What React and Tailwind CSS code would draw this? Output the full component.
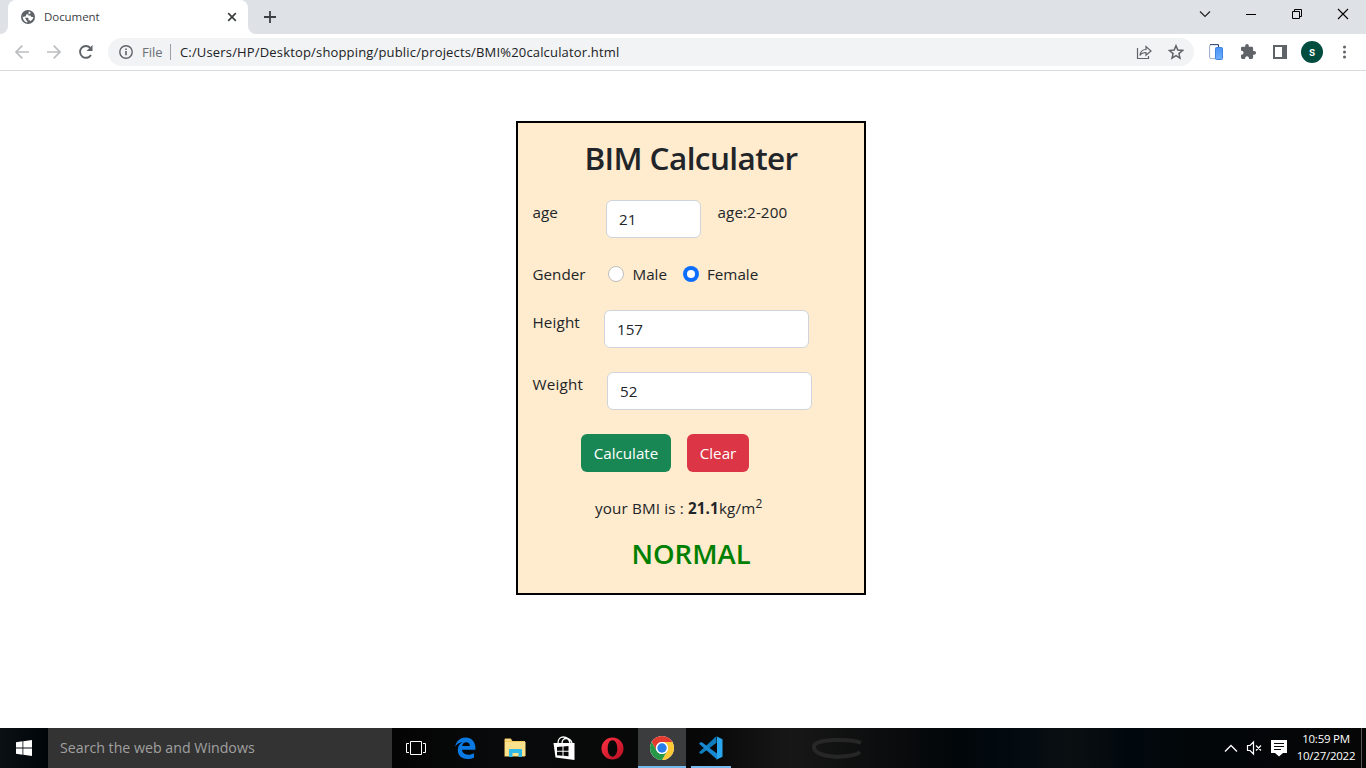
import React from "react";

function Globe() {
  return (
    <svg width="14" height="14" viewBox="0 0 14 14">
      <circle cx="7" cy="7" r="7" fill="#5f6368" />
      <path d="M7.7 1.5v1.6c0 .8-.6 1.3-1.4 1.3H5v1.3c0 .4-.3.7-.7.7H3v1.3h3.8c.4 0 .7.3.7.7v1.9h.7c.6 0 1.1.4 1.3.9A5.5 5.5 0 0 0 12.5 7h-1.6a1.5 1.5 0 0 1-1.5-1.4H7.2V4.2l2.2-.6V2C8.900 1.700 8.300 1.500 7.700 1.500zM1.700 6.200C1.500 9 3.500 12 6.300 12.400V11c-.8 0-1.300-.6-1.300-1.400V9z" fill="#fff" />
    </svg>
  );
}

function TabStrip() {
  return (
    <div className="flex h-[34px] bg-[#dee1e6]">
      <div className="flex w-2 items-end bg-white">
        <div className="h-[34px] w-2 rounded-br-lg bg-[#dee1e6]" />
      </div>
      <div className="flex w-[240px] items-center rounded-t-lg bg-white pl-[13px] pr-[11px]">
        <Globe />
        <span className="ml-[9px] flex-1 text-[11.5px] leading-none tracking-[-0.06px] text-[#3c4043]">Document</span>
        <svg width="10" height="10" viewBox="0 0 10 10" stroke="#3c4043" strokeWidth="1.7"><path d="M1.200 1.200l7.600 7.600M8.800 1.200L1.200 8.800" /></svg>
      </div>
      <div className="flex w-2 bg-white">
        <div className="h-[34px] w-2 rounded-bl-lg bg-[#dee1e6]" />
      </div>
      <div className="flex flex-1 items-center pl-2">
        <svg width="12" height="12" viewBox="0 0 12 12" stroke="#3c4043" strokeWidth="1.8"><path d="M6 0v12M0 6h12" /></svg>
      </div>
      <div className="flex items-start pt-[8px]">
        <svg width="168" height="12" viewBox="1198 8 168 12" fill="none" stroke="#1a1a1a">
          <path d="M1200 11.500l5 5 5-5" stroke="#222" strokeWidth="1.200" />
          <path d="M1246 14.500h10" stroke="#000" />
          <path d="M1292.500 11.500h7v7h-7zM1294.500 11.500v-2h7v7h-2" stroke="#000" />
          <path d="M1338 9l10 10M1348 9l-10 10" stroke="#000" strokeWidth="1.100" />
        </svg>
      </div>
    </div>
  );
}

function Toolbar() {
  return (
    <div className="flex h-[37px] items-center border-b border-[#d8dadd] bg-white">
      <svg className="ml-[15px] shrink-0" width="78" height="16" viewBox="15 44 78 16" fill="none" strokeWidth="1.7">
        <path d="M29 52H16M22.300 45.700L16 52l6.300 6.300M47 52h13M53.700 45.700L60 52l-6.300 6.300" stroke="#bbbdbf" />
        <path d="M91 55A5.900 5.900 0 1 1 90.300 47.900" stroke="#5f6368" strokeWidth="1.900" />
        <path d="M92.500 45v6h-6z" fill="#5f6368" />
      </svg>
      <div className="ml-[15px] flex h-7 w-[1086px] items-center rounded-full bg-[#f1f3f4] pl-[11px] pr-[10px]">
        <svg width="14" height="14" viewBox="0 0 14 14" fill="none" stroke="#5f6368" strokeWidth="1.400"><circle cx="7" cy="7" r="6.200" /><path d="M7 6v4.200M7 3.600v1.400" strokeWidth="1.600" /></svg>
        <span className="ml-[9px] w-[21px] text-[13px] leading-none text-[#6b6f74]">File</span>
        <div className="ml-[7px] h-4 w-px bg-[#9aa0a6]" />
        <span className="ml-[9px] flex-1 whitespace-nowrap text-[13px] leading-none tracking-[0.165px] text-[#202124]">C:/Users/HP/Desktop/shopping/public/projects/BMI%20calculator.html</span>
        <svg width="48" height="16" viewBox="1136 44 48 16" fill="none" stroke="#5f6368" strokeWidth="1.200">
          <path d="M1137.500 48v10.500h11V56M1140 55.500c.4-4 2.500-6 6-6V46.500l5 4.500-5 4.300v-2.800c-3 0-4.700.8-6 3z" />
          <path d="M1176 45.700l1.800 4.400 4.700.4-3.600 3.100 1.100 4.600-4-2.500-4 2.500 1.100-4.600-3.600-3.100 4.700-.4z" strokeWidth="1.500" />
        </svg>
      </div>
      <svg className="ml-[15px] shrink-0" width="78" height="18" viewBox="1209 43 78 18">
        <defs><linearGradient id="phone" x1="0" y1="0" x2="0" y2="1"><stop stopColor="#4a94f5" /><stop offset="1" stopColor="#6db0ff" /></linearGradient></defs>
        <rect x="1209.600" y="44.600" width="9" height="14" rx="1.500" fill="#fff" stroke="#9aabc2" />
        <path d="M1210 44.600h8.500v3" stroke="#31496b" fill="none" />
        <rect x="1215.500" y="47.500" width="7" height="12" rx="1" fill="url(#phone)" stroke="#3e83df" />
        <path transform="translate(.7 0)" d="M1253.500 51h-1.100v-2.900c0-.8-.6-1.400-1.400-1.400h-2.900v-1a1.800 1.800 0 0 0-3.600 0v1h-2.800c-.8 0-1.400.6-1.400 1.400v2.700h1a2 2 0 0 1 0 3.900h-1v2.900c0 .8.600 1.400 1.400 1.400h2.700v-1.100a2 2 0 0 1 3.900 0V59h2.700c.8 0 1.400-.6 1.400-1.400v-2.900h1.100a1.850 1.850 0 0 0 0-3.700z" fill="#5f6368" />
        <path fillRule="evenodd" d="M1273 45h14v14h-14zM1275 47v10h7V47z" fill="#5f6368" />
      </svg>
      <div className="ml-[14px] flex h-[22px] w-[22px] shrink-0 items-center justify-center rounded-full bg-[#004d40] pb-px font-[Roboto] text-[9px] font-medium leading-none text-white"><span className="text-[12px]">s</span></div>
      <svg className="ml-[20px]" width="4" height="14" viewBox="0 0 4 14" fill="#5f6368"><circle cx="1.500" cy="2" r="1.500" /><circle cx="1.500" cy="7" r="1.500" /><circle cx="1.500" cy="12" r="1.500" /></svg>
    </div>
  );
}

function Field({ value, className }) {
  return (
    <div className={"flex h-[38px] items-center rounded-md border border-[#ced4da] bg-white pl-3 text-[15.2px] " + className}>
      <span className="leading-6">{value}</span>
    </div>
  );
}

function Calculator() {
  return (
    <main className="flex flex-1 items-start bg-white pl-[516px] pt-[50px]">
      <section className="flex h-[474px] w-[350px] flex-col border-2 border-black bg-[#ffebcd] text-[15.2px] font-[370] leading-6 text-[#212529]">
        <h1 className="mt-[16px] text-center text-[31.5px] font-[560] leading-[38px] tracking-[-0.6px]">BIM Calculater</h1>
        <div className="mt-[23px] flex h-[38px] items-start pl-[14px]">
          <span className="w-[74px] pl-[0.5px]">age</span>
          <Field value="21" className="w-[95px]" />
          <span className="ml-[16.5px] tracking-[0.1px]">age:2-200</span>
        </div>
        <div className="mt-[24px] flex h-6 items-center pl-[14px]">
          <span className="w-[76px] pl-[0.5px]">Gender</span>
          <span className="h-4 w-4 rounded-full border border-[#bfbfbf] bg-white" />
          <span className="ml-2 w-[51px] pl-[0.5px]">Male</span>
          <span className="flex h-4 w-4 items-center justify-center rounded-full bg-[#0d6efd]"><span className="h-2 w-2 rounded-full bg-white" /></span>
          <span className="ml-2">Female</span>
        </div>
        <div className="mt-[24px] flex h-[38px] items-start pl-[14px]">
          <span className="w-[72px] pl-[0.5px] tracking-[0.15px]">Height</span>
          <Field value="157" className="w-[205px]" />
        </div>
        <div className="mt-[24px] flex h-[38px] items-start pl-[14px]">
          <span className="w-[75px] pl-[0.5px] tracking-[0.2px]">Weight</span>
          <Field value="52" className="w-[205px]" />
        </div>
        <div className="mt-[24px] flex gap-4 pl-[63px] font-normal text-white">
          <button className="h-[38px] w-[90px] whitespace-nowrap rounded-md bg-[#198754]">Calculate</button>
          <button className="h-[38px] w-[62px] rounded-md bg-[#dc3545]">Clear</button>
        </div>
        <p className="mt-[24px] h-6 whitespace-nowrap pl-[77px] tracking-[0.15px]">your BMI is : <b>21.1</b>kg/m<sup className="text-[12px] leading-none">2</sup></p>
        <h2 className="mt-[17px] text-center text-[27.5px] font-[560] leading-[34px] text-[#008000]">NORMAL</h2>
      </section>
    </main>
  );
}

function Slot({ children, className = "" }) {
  return <div className={"mr-px flex h-10 w-12 shrink-0 items-center justify-center " + className}>{children}</div>;
}

function Taskbar() {
  return (
    <footer className="flex h-10 items-center bg-[linear-gradient(90deg,#0b1014_0,#00050a_48px,#040404_392px,#090a0b_500px,#070707_700px,#171717_790px,#0b0c0d_890px,#01060a_960px,#020a10_1010px,#0a0f12_1070px,#01080d_1130px,#020609_1200px,#060606_1366px)] text-white">
      <div className="flex h-10 w-12 items-center justify-center">
        <svg width="16" height="16" viewBox="0 0 16 16" fill="#fff"><path d="M0 2.200l6.500-.9v6.200H0zM7.300 1.200L16 0v7.500H7.300zM0 8.400h6.500v6.300L0 13.800zM7.300 8.400H16V16l-8.700-1.200z" /></svg>
      </div>
      <div className="flex h-10 w-[344px] items-center bg-[#333] pl-3 pt-px text-[14.2px] leading-none text-[#a0a0a0]">Search the web and Windows</div>
      <Slot className="mr-[2px]">
        <svg width="20" height="14" viewBox="0 0 20 14" fill="none" stroke="#fff"><path d="M4.500.5h11v13h-11zM3 2.500H.5v9H3M17 2.500h2.500v9H17" /></svg>
      </Slot>
      <Slot>
        <svg width="21" height="22" viewBox="0 0 21 22"><path d="M.2 9.600C1.200 3.800 5.300.4 10.600.4c6.200 0 9.800 4.600 9.800 10v2.400H7c.3 3.500 3.200 4.900 6.600 4.900 2 0 3.900-.6 5.500-1.500v4.200c-1.900 1-4.300 1.500-6.700 1.500-6 0-9.600-3.500-9.600-8.900 0-3.800 2.100-6.600 5.100-8C5 5.400 2 6.600.2 9.600zM7.200 9h7.700c0-2.500-1.300-3.800-3.600-3.800S7.600 6.700 7.200 9z" fill="#0a7ae2" /></svg>
      </Slot>
      <Slot className="pl-[2px]">
        <svg width="22" height="20" viewBox="0 0 22 20"><path d="M.5 3V1.500Q.5.500 1.500.5h5.300L8.500 3H21v15.500H.5z" fill="#f4c95d" /><path d="M1 4h20.500v14H1z" fill="#fce18c" /><path d="M1.500 2h5" stroke="#fff0b4" /><path d="M5 19v-7.500Q5 11 6.500 11h10q1.500 0 1.500.5V19h-3.500v-4h-6v4z" fill="#2fb9e8" /></svg>
      </Slot>
      <Slot className="pl-px">
        <svg width="22" height="24" viewBox="0 0 22 24"><path d="M.5 7l21 0v17L2.500 21.500z" fill="#fff" /><path d="M5 7c0-8 10-8 12 0M9 7c0-6 8-6 10 0" fill="none" stroke="#fff" strokeWidth="1.300" /><path d="M4 11l5.500-.5v4.300H4zM10.500 10.400l5-.4v4.800h-5zM4 15.700h5.500v4L4 19.200zM10.500 15.700h5v4.600l-5-.5z" fill="#080808" /></svg>
      </Slot>
      <Slot className="pl-px">
        <svg width="23" height="23" viewBox="0 0 24 24"><defs><linearGradient id="opera" x2="1" y2="1"><stop stopColor="#ff3344" /><stop offset="1" stopColor="#b60d22" /></linearGradient></defs><path fillRule="evenodd" d="M12 .5a11.500 11.500 0 1 0 0 23 11.500 11.500 0 0 0 0-23zm0 3c3 0 5 3.600 5 8.500s-2 8.500-5 8.500S7 17 7 12s2-8.500 5-8.500z" fill="url(#opera)" /></svg>
      </Slot>
      <Slot className="ml-px border-b-2 border-[#76b9ed] bg-[#3a3c3e] pt-[2px]">
        <svg width="24" height="24" viewBox="0 0 24 24"><circle cx="12" cy="12" r="12" fill="#fff" /><path d="M1.610 6A12 12 0 0 1 22.390 6H12a6 6 0 0 0-5.200 9z" fill="#e33b2e" /><path d="M22.390 6A12 12 0 0 1 12 24l5.200-9A6 6 0 0 0 12 6z" fill="#fcc934" /><path d="M12 24A12 12 0 0 1 1.610 6l5.190 9a6 6 0 0 0 10.400 0z" fill="#279846" /><circle cx="12" cy="12" r="6" fill="#fff" /><circle cx="12" cy="12" r="4.700" fill="#287de8" /></svg>
      </Slot>
      <Slot className="flex-col">
        <div className="flex h-[38px] items-center pt-[2px]">
          <svg width="24" height="24" viewBox="0 0 24 24"><path d="M17.300.3L0 16.200l1.400 1.500 1.500.1L17.500 6.800z" fill="#0f7dbd" /><path d="M0 7.800l1.500-1.500 1.400-.1L18 17.600v6z" fill="#1788d1" /><path d="M17.300.3L23.500 3.200v17.600l-6.200 2.900c.5-.3.700-.7.700-1.400V1.700c0-.7-.2-1.100-.7-1.400z" fill="#2aa6ee" /></svg>
        </div>
        <div className="h-[2px] w-10 bg-[#76b9ed]" />
      </Slot>
      <svg className="ml-[74px] opacity-70" width="60" height="40" viewBox="810 0 60 40" fill="none"><path d="M861 15c-8-4-45-5-47 3-2 13 38 13 46 6" stroke="#303030" strokeWidth="4" /></svg>
      <div className="flex-1" />
      <svg className="shrink-0" width="64" height="18" viewBox="1224 739 64 18" fill="none" stroke="#fff">
        <path d="M1225 751.500l6-6 6 6" strokeWidth="1.300" />
        <path d="M1247.500 745.500h2.500l3.500-3.500v12l-3.500-3.500h-2.500zM1256 745.500l5 5M1261 745.500l-5 5" strokeWidth="1.200" />
        <path d="M1271 740h16v13h-4l-4 3.500-4-3.500h-4z" fill="#fff" stroke="none" />
        <path d="M1274 743.500h10M1274 746.500h10M1274 749.500h7" stroke="#090909" />
      </svg>
      <div className="mb-[2px] ml-[7px] mr-[4px] flex w-[62px] flex-col items-center whitespace-nowrap text-[11.5px] leading-[17px] tracking-[-0.25px]">
        <span>10:59 PM</span>
        <span>10/27/2022</span>
      </div>
      <div className="mr-[4px] h-10 w-px bg-[#555]" />
    </footer>
  );
}

export default function App() {
  return (
    <div className="flex h-[768px] w-[1366px] flex-col overflow-hidden bg-white font-['Open_Sans','Noto_Sans',sans-serif]">
      <TabStrip />
      <Toolbar />
      <Calculator />
      <Taskbar />
    </div>
  );
}
